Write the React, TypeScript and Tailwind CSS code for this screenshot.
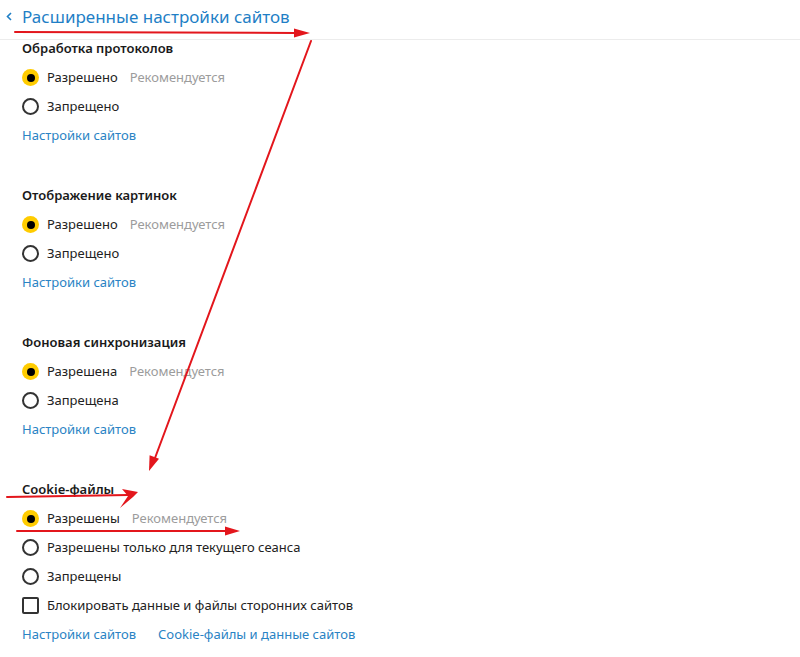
import * as React from "react"

type Option = {
  label: string
  checked?: boolean
  hint?: string
}

type Section = {
  title: string
  options: Option[]
  checkbox?: string
  links: string[]
}

const sections: Section[] = [
  {
    title: "Обработка протоколов",
    options: [
      { label: "Разрешено", checked: true, hint: "Рекомендуется" },
      { label: "Запрещено" },
    ],
    links: ["Настройки сайтов"],
  },
  {
    title: "Отображение картинок",
    options: [
      { label: "Разрешено", checked: true, hint: "Рекомендуется" },
      { label: "Запрещено" },
    ],
    links: ["Настройки сайтов"],
  },
  {
    title: "Фоновая синхронизация",
    options: [
      { label: "Разрешена", checked: true, hint: "Рекомендуется" },
      { label: "Запрещена" },
    ],
    links: ["Настройки сайтов"],
  },
  {
    title: "Cookie-файлы",
    options: [
      { label: "Разрешены", checked: true, hint: "Рекомендуется" },
      { label: "Разрешены только для текущего сеанса" },
      { label: "Запрещены" },
    ],
    checkbox: "Блокировать данные и файлы сторонних сайтов",
    links: ["Настройки сайтов", "Cookie-файлы и данные сайтов"],
  },
]

function Radio({ checked }: { checked?: boolean }) {
  if (checked) {
    return (
      <span className="flex h-[17px] w-[17px] items-center justify-center rounded-full bg-[#ffcc00]">
        <span className="h-[8px] w-[8px] rounded-full bg-black" />
      </span>
    )
  }
  return <span className="h-[17px] w-[17px] rounded-full border-2 border-[#333]" />
}

// hand-drawn red annotation arrows on top of the screenshot
function Arrows() {
  const red = "#e3161c"
  return (
    <svg
      className="pointer-events-none absolute left-0 top-0"
      width="800"
      height="657"
      viewBox="0 0 800 657"
    >
      <g stroke={red} strokeWidth="2" strokeLinecap="round" fill="none">
        <path d="M15 32 L296 33" />
        <path d="M311 41 L155 458" />
        <path d="M7 497 L128 495" />
        <path d="M17 531 L228 531" />
      </g>
      <g fill={red}>
        <polygon points="310,33 294,28.5 294,37.5" />
        <polygon points="149,471 159,458.7 149.6,455.2" />
        <polygon points="138,492 122,489 128,496 120,508 133,497" />
        <polygon points="240,531 225,526.5 225,535.5" />
      </g>
    </svg>
  )
}

export default function App() {
  return (
    <div
      className="relative h-[657px] w-[800px] overflow-hidden bg-white text-[13px] text-[#222]"
      style={{ fontFamily: '"Noto Sans", "Open Sans", sans-serif' }}
    >
      {/* Header */}
      <div className="flex h-10 items-center border-b border-[#ececec] pb-[7px] pl-[6px]">
        <svg width="6" height="9" viewBox="0 0 6 9" className="mr-[10px] mt-[1px]">
          <path d="M5 1 L1.5 4.5 L5 8" stroke="#1f7fc6" strokeWidth="1.6" fill="none" />
        </svg>
        <span className="text-[17px] leading-none text-[#1f7fc6]">
          Расширенные настройки сайтов
        </span>
      </div>

      {/* Sections */}
      <div className="flex flex-col gap-[37px] pl-[22px] pt-px">
        {sections.map((section) => (
          <div key={section.title} className="flex flex-col">
            <div className="flex h-4 items-center font-semibold text-[#1a1a1a]">
              {section.title}
            </div>
            <div className="mt-[6px] flex flex-col">
              {section.options.map((opt) => (
                <div key={opt.label} className="flex h-[29px] items-center">
                  <Radio checked={opt.checked} />
                  <span className="ml-[8px]">{opt.label}</span>
                  {opt.hint && <span className="ml-[12px] text-[#9c9c9c]">{opt.hint}</span>}
                </div>
              ))}
              {section.checkbox && (
                <div className="flex h-[29px] items-center">
                  <span className="h-[17px] w-[17px] rounded-[2px] border-2 border-[#333]" />
                  <span className="ml-[8px]">{section.checkbox}</span>
                </div>
              )}
              <div className="flex h-[30px] items-center gap-[22px] text-[#2a83c4]">
                {section.links.map((link) => (
                  <span key={link}>{link}</span>
                ))}
              </div>
            </div>
          </div>
        ))}
      </div>

      <Arrows />
    </div>
  )
}
